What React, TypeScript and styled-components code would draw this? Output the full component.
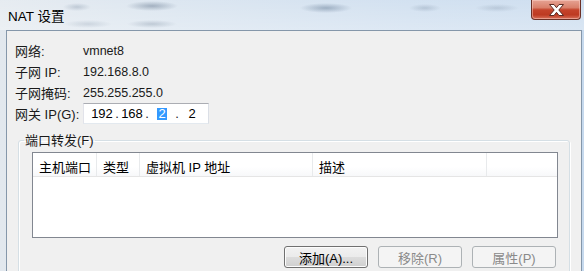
import styled, { createGlobalStyle } from 'styled-components';

const FONT = `"Liberation Sans", "Noto Sans CJK SC", sans-serif`;

const GlobalStyle = createGlobalStyle`
  html, body {
    margin: 0;
    padding: 0;
    background: #d3e1ef;
  }
  * { box-sizing: border-box; }
`;

const Window = styled.div`
  width: 584px;
  height: 271px;
  overflow: hidden;
  display: flex;
  flex-direction: column;
  font-family: ${FONT};
  color: #000;
  background: linear-gradient(90deg, #e2e8ee 0%, #d6e2ee 30%, #cbdcee 70%, #c6d9ed 100%);
`;

// glass title bar, the blurred smudges are windows behind it
const TitleBar = styled.div`
  height: 30px;
  flex: none;
  display: flex;
  align-items: center;
  padding-left: 8px;
  background:
    radial-gradient(ellipse 14px 4px at 77px 7px, rgba(95, 115, 140, 0.28), transparent),
    radial-gradient(ellipse 26px 5px at 152px 6px, rgba(80, 100, 125, 0.42), transparent),
    radial-gradient(ellipse 24px 4px at 88px 24px, rgba(95, 115, 140, 0.2), transparent),
    radial-gradient(ellipse 25px 4px at 152px 24px, rgba(80, 100, 125, 0.25), transparent),
    radial-gradient(ellipse 26px 5px at 326px 8px, rgba(70, 95, 125, 0.4), transparent),
    radial-gradient(ellipse 16px 4px at 425px 8px, rgba(90, 110, 135, 0.25), transparent),
    radial-gradient(ellipse 22px 4px at 497px 8px, rgba(90, 110, 135, 0.22), transparent),
    linear-gradient(180deg, rgba(255, 255, 255, 0.15), rgba(255, 255, 255, 0.35));
`;

const Title = styled.span`
  font-size: 13.5px;
  color: #000;
  flex: 1;
`;

const CloseButton = styled.div`
  align-self: flex-start;
  width: 50px;
  height: 20px;
  margin-right: 3px;
  border: 1px solid #6b3026;
  border-top: none;
  border-radius: 0 0 4px 4px;
  display: flex;
  align-items: center;
  justify-content: center;
  box-shadow: inset 0 0 0 1px rgba(255, 220, 210, 0.45);
  background: linear-gradient(
    180deg,
    #e6a394 0%,
    #d9806b 40%,
    #c4432b 52%,
    #bd3a22 78%,
    #d8705a 100%
  );
`;

const Client = styled.div`
  flex: 1;
  margin: 0 2px 0 6px;
  border: 1px solid #8597aa;
  border-bottom: none;
  background: #f0f0f0;
  padding: 9px 11px 0 8px;
`;

const InfoRow = styled.div`
  display: flex;
  align-items: center;
  height: 21px;
  font-size: 13px;
  color: #1a1a1a;
`;

const Label = styled.span`
  width: 68px;
  flex: none;
  white-space: nowrap;
`;

const Value = styled.span`
  font-size: 12.5px;
`;

const IpBox = styled.div`
  width: 126px;
  height: 21px;
  display: flex;
  align-items: center;
  padding-left: 5px;
  background: #fff;
  border: 1px solid;
  border-color: #abadb3 #dbdfe6 #e3e9ef #e2e3ea;
  font-size: 13px;
`;

const IpField = styled.span<{ $selected?: boolean }>`
  width: 26px;
  display: flex;
  justify-content: center;
  span {
    padding: 0 1px;
    line-height: 12px;
    background: ${p => (p.$selected ? '#3399ff' : 'transparent')};
    color: ${p => (p.$selected ? '#fff' : '#000')};
  }
`;

const IpDot = styled.span`
  width: 4px;
  text-align: center;
`;

const Group = styled.fieldset`
  margin: 9px 0 0 3px;
  padding: 0 11px 12px 13px;
  border: 1px solid #d5dfe5;
  border-radius: 3px;
  box-shadow: inset 1px 1px 0 #fff, 1px 1px 0 #fff;
  min-width: 0;
`;

const Legend = styled.legend`
  margin-left: -8px;
  padding: 0 1px;
  font-size: 13px;
  line-height: 15px;
  color: #1a1a1a;
`;

const ListView = styled.div`
  margin-top: 4px;
  height: 86px;
  border: 1px solid #828790;
  background: #fff;
`;

const Header = styled.div`
  display: flex;
  height: 24px;
  border-bottom: 1px solid #e5e5e5;
  background: linear-gradient(180deg, #ffffff 0%, #ffffff 60%, #f7f8fa 100%);
  font-size: 13px;
`;

const HeaderCell = styled.div<{ $w?: number }>`
  ${p => (p.$w ? `width: ${p.$w}px; flex: none;` : 'flex: 1;')}
  padding: 4px 0 0 6px;
  border-right: 1px solid #e8eaec;
  white-space: nowrap;
  &:last-child { border-right: none; }
`;

const ButtonRow = styled.div`
  display: flex;
  justify-content: flex-end;
  gap: 10px;
  margin-top: 8px;
  padding-right: 2px;
`;

const Button = styled.button`
  width: 84px;
  height: 22px;
  padding: 0;
  font-family: ${FONT};
  font-size: 13px;
  color: #000;
  border: 1px solid #707070;
  border-radius: 3px;
  box-shadow: inset 0 0 0 1px #fcfcfc;
  background: linear-gradient(180deg, #f2f2f2 0%, #ebebeb 50%, #dddddd 50%, #cfcfcf 100%);
  &:disabled {
    color: #8a8a8a;
    border-color: #adb2b5;
    box-shadow: none;
    background: #f4f4f4;
  }
`;

function CloseGlyph() {
  return (
    <svg width="15" height="12" viewBox="0 0 15 12">
      <polygon
        points="0.5,0.5 5,0.5 7.5,3.7 10,0.5 14.5,0.5 9.8,6 14.5,11.5 10,11.5 7.5,8.3 5,11.5 0.5,11.5 5.2,6"
        fill="#fff"
        stroke="#5b2a22"
        strokeWidth="1"
        strokeLinejoin="round"
      />
    </svg>
  );
}

const columns: { name: string; w?: number }[] = [
  { name: '主机端口', w: 64 },
  { name: '类型', w: 43 },
  { name: '虚拟机 IP 地址', w: 173 },
  { name: '描述', w: 174 },
  { name: '' },
];

export default function App() {
  return (
    <>
      <GlobalStyle />
      <Window>
        <TitleBar>
          <Title>NAT 设置</Title>
          <CloseButton>
            <CloseGlyph />
          </CloseButton>
        </TitleBar>
        <Client>
          <InfoRow>
            <Label>网络:</Label>
            <Value>vmnet8</Value>
          </InfoRow>
          <InfoRow>
            <Label>子网 IP:</Label>
            <Value>192.168.8.0</Value>
          </InfoRow>
          <InfoRow>
            <Label>子网掩码:</Label>
            <Value>255.255.255.0</Value>
          </InfoRow>
          <InfoRow>
            <Label>网关 IP(G):</Label>
            <IpBox>
              <IpField><span>192</span></IpField>
              <IpDot>.</IpDot>
              <IpField><span>168</span></IpField>
              <IpDot>.</IpDot>
              <IpField $selected><span>2</span></IpField>
              <IpDot>.</IpDot>
              <IpField><span>2</span></IpField>
            </IpBox>
          </InfoRow>

          <Group>
            <Legend>端口转发(F)</Legend>
            <ListView>
              <Header>
                {columns.map((c, i) => (
                  <HeaderCell key={i} $w={c.w}>{c.name}</HeaderCell>
                ))}
              </Header>
            </ListView>
            <ButtonRow>
              <Button>添加(A)...</Button>
              <Button disabled>移除(R)</Button>
              <Button disabled>属性(P)</Button>
            </ButtonRow>
          </Group>
        </Client>
      </Window>
    </>
  );
}
